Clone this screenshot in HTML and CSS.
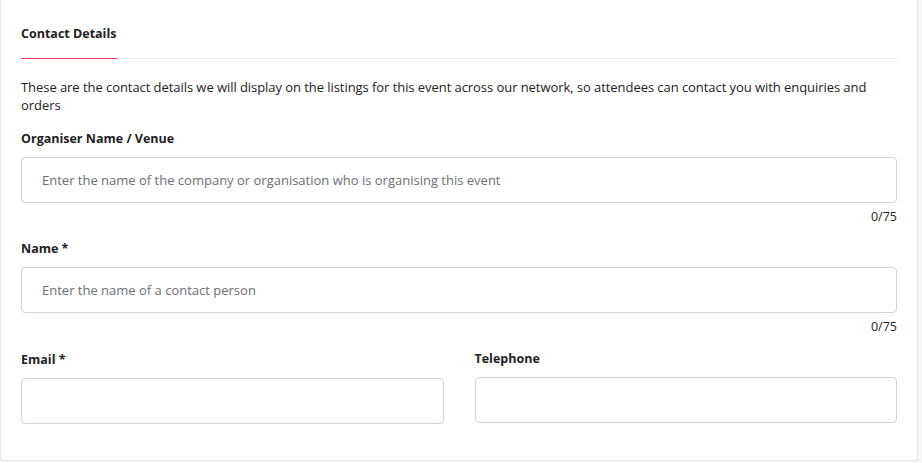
FILE: index.html
```html
<!DOCTYPE html>
<html lang="en">
  <head>
    <meta charset="utf-8" />
    <meta name="viewport" content="width=device-width,initial-scale=1" />
    <title>Contact Details</title>
    <link rel="stylesheet" href="styles.css">
  </head>
  <body>
    <main class="card">
      <nav class="tabs">
        <span class="tab active">Contact Details</span>
      </nav>

      <p class="intro">
        These are the contact details we will display on the listings for this event across our network, so attendees can contact you with enquiries and orders
      </p>

      <div class="field">
        <label class="label" for="organiser">Organiser Name / Venue</label>
        <input class="input" id="organiser" type="text" maxlength="75"
          placeholder="Enter the name of the company or organisation who is organising this event" />
        <div class="counter">0/75</div>
      </div>

      <div class="field">
        <label class="label" for="name">Name *</label>
        <input class="input" id="name" type="text" maxlength="75"
          placeholder="Enter the name of a contact person" />
        <div class="counter">0/75</div>
      </div>

      <div class="row">
        <div class="field">
          <label class="label" for="email">Email *</label>
          <input class="input" id="email" type="email" />
        </div>
        <div class="field">
          <label class="label" for="phone">Telephone</label>
          <input class="input" id="phone" type="tel" />
        </div>
      </div>
    </main>
  </body>
</html>
```

FILE: styles.css
```css
html {
  font-family: "Open Sans", sans-serif;
  background-color: #f4f6f7;
}

body {
  margin: 0;
}

*,
:after,
:before {
  box-sizing: border-box;
}

.card {
  width: 918px;
  height: 461px;
  padding: 0 20px;
  background-color: #fff;
  border: 1px solid #e2e7e9;
  border-top: 0;
  border-radius: 0 0 4px 4px;
  box-shadow: 0 2px 0 #e8edee;
  color: #1f2124;
}

.tabs {
  display: flex;
  border-bottom: 1px solid #e3e7ea;
}

.tab {
  width: 96px;
  margin-bottom: -1px;
  padding: 26px 0 16px;
  font-size: 12.5px;
  font-weight: 700;
  line-height: 16px;
  border-bottom: 1px solid transparent;
}

.tab.active {
  border-bottom-color: #f2385a;
}

.intro {
  margin: 19px 0 0;
  font-size: 13px;
  line-height: 18px;
  letter-spacing: -0.06px;
}

.field {
  display: flex;
  flex-direction: column;
}

.label {
  margin-top: 16px;
  font-size: 12.5px;
  font-weight: 700;
  line-height: 18px;
}

.counter + .label,
.counter ~ .label {
  margin-top: 14px;
}

.field + .field .label {
  margin-top: 14px;
}

.row .label {
  margin-top: 15px;
}

.input {
  height: 46px;
  margin-top: 9px;
  padding: 0 20px;
  font-family: inherit;
  font-size: 13px;
  color: #333;
  background: #fff;
  border: 1px solid #cfd4da;
  border-radius: 4px;
  outline: none;
}

.input::placeholder {
  color: #6c7075;
}

.counter {
  margin-top: 5px;
  font-size: 12.5px;
  line-height: 18px;
  text-align: right;
}

.row {
  display: grid;
  grid-template-columns: 1fr 1fr;
  gap: 31px;
}
```
